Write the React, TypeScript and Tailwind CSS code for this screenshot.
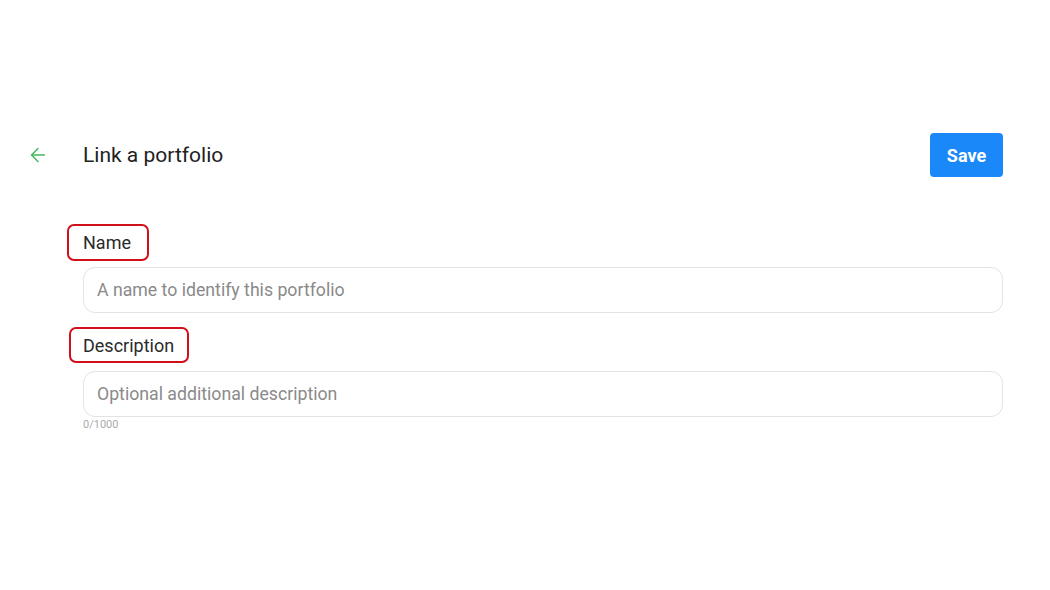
import React from 'react';
import { ArrowLeft } from 'lucide-react';

const App = () => {
  return (
    <div className="min-h-screen w-full bg-white pt-[133px] pl-[30px] pr-[47px] font-['Roboto',sans-serif]">
      {/* Header */}
      <div className="flex items-center h-[44px]">
        <div className="w-[53px] flex items-center">
          <ArrowLeft size={22} strokeWidth={1.6} className="-ml-[3px] text-[#43b85c]" />
        </div>
        <h1 className="text-[21px] text-[#222] leading-none">Link a portfolio</h1>
        <button className="ml-auto w-[73px] h-[44px] rounded-[4px] bg-[#1a88f8] text-white text-[18px] font-bold">
          Save
        </button>
      </div>

      {/* Form */}
      <div className="pl-[53px] pt-[47px]">
        <div className="-ml-[16px] inline-flex items-center h-[37px] pl-[14px] pr-[16px] border-[2.5px] border-[#d0101a] rounded-[7px]">
          <span className="text-[18px] text-[#2a2a2a]">Name</span>
        </div>
        <input
          className="block mt-[6px] w-full h-[46px] rounded-[12px] border border-[#e3e3e3] px-[13px] text-[17.7px] text-[#222] placeholder:text-[#8a8a8a] outline-none"
          placeholder="A name to identify this portfolio"
        />

        <div className="-ml-[14px] mt-[14px] inline-flex items-center h-[36px] pl-[12px] pr-[13px] border-[2.5px] border-[#d0101a] rounded-[7px]">
          <span className="text-[18px] text-[#2a2a2a]">Description</span>
        </div>
        <input
          className="block mt-[8px] w-full h-[46px] rounded-[12px] border border-[#e3e3e3] px-[13px] text-[17.7px] text-[#222] placeholder:text-[#8a8a8a] outline-none"
          placeholder="Optional additional description"
        />
        <div className="mt-[1px] text-[11px] text-[#aaa] leading-[14px]">0/1000</div>
      </div>
    </div>
  );
};

export default App;
